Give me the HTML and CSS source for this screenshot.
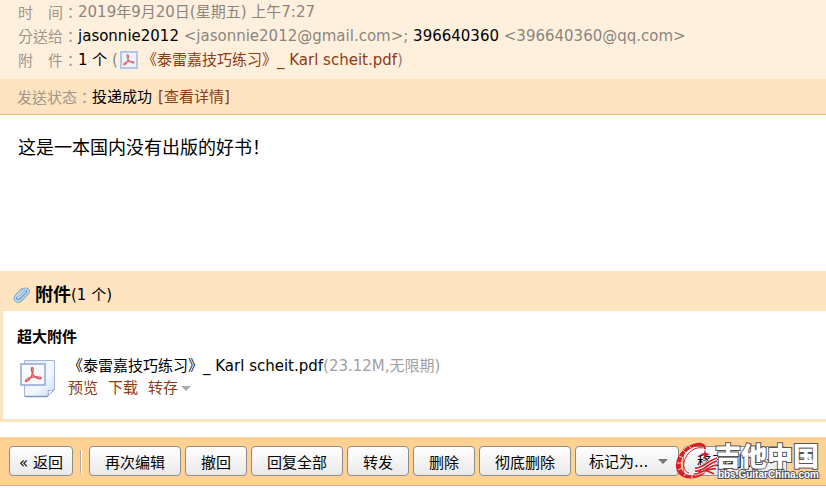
FILE: index.html
```html
<!DOCTYPE html>
<html lang="zh-CN">
<head>
    <meta charset="UTF-8">
    <meta name="viewport" content="width=device-width, initial-scale=1.0">
    <title>邮件</title>
    <link rel="stylesheet" href="styles.css">
</head>
<body>
    <!-- Mail info -->
    <div class="mail-info">
        <div class="row"><span class="label" lang="zh-TW">时　间：</span><span>2019年9月20日(星期五) 上午7:27</span></div>
        <div class="row"><span class="label" lang="zh-TW">分送给：</span><span><b>jasonnie2012</b> &lt;jasonnie2012@gmail.com&gt;; <b>396640360</b> &lt;396640360@qq.com&gt;</span></div>
        <div class="row">
            <span class="label" lang="zh-TW">附　件：</span><span><b>1 个</b> (</span>
            <svg class="pdf-small" width="18" height="18" viewBox="0 0 18 18">
                <rect x="1" y="1" width="16" height="16" fill="#eef3fd" stroke="#b3c5ea" stroke-width="2"/>
                <path d="M7.500 3.500c1.500 0 1 3 .7 4.500-.6 2.500-2.500 6-4.200 5.800-1.400-.6 1.500-2.600 4-3.100 2.300-.5 6.300-.3 6.200.8-.4 1.200-4.500-.7-5.700-2.500C7.300 7.200 6.400 3.500 7.500 3.500z" fill="none" stroke="#e0706c" stroke-width="1.200"/>
            </svg>
            <a href="#">《泰雷嘉技巧练习》_ Karl scheit.pdf</a><span>)</span>
        </div>
    </div>
    <div class="status">
        <span class="label" lang="zh-TW">发送状态：</span><b>投递成功</b><a href="#">[查看详情]</a>
    </div>

    <!-- Mail body -->
    <div class="mail-body">这是一本国内没有出版的好书！</div>

    <!-- Attachments -->
    <div class="attach">
        <div class="attach-head">
            <svg width="18" height="18" viewBox="0 0 18 18" fill="none" stroke-linecap="round">
                <path d="M12.500 5.500l-6 6c-1 1-2.400-.2-1.400-1.300l6-6.200c2.400-2.300 5.600.6 3.400 3.200l-6.600 6.900c-3.500 3.300-7.600-.8-4.600-4.400l5.600-6" stroke="#6f9cc4" stroke-width="3"/>
                <path d="M12.500 5.500l-6 6c-1 1-2.400-.2-1.400-1.300l6-6.200c2.400-2.300 5.600.6 3.400 3.200l-6.600 6.900c-3.500 3.300-7.600-.8-4.600-4.400l5.600-6" stroke="#c3dbf0" stroke-width="1.400"/>
            </svg>
            <h2>附件</h2><span>(1 个)</span>
        </div>
        <div class="attach-list">
            <h3>超大附件</h3>
            <div class="file">
                <svg width="36" height="39" viewBox="0 0 36 39">
                    <defs>
                        <linearGradient id="page" x1="0" y1="0" x2="1" y2="1">
                            <stop offset="0" stop-color="#e3ecfb"/>
                            <stop offset=".6" stop-color="#f3f8ff"/>
                            <stop offset="1" stop-color="#c9daf3"/>
                        </linearGradient>
                    </defs>
                    <path d="M4.500 1.500h30v29l-7 7h-23z" fill="url(#page)" stroke="#a3b6d8"/>
                    <path d="M5 37.500h22.500" stroke="#7f97c6" stroke-width="1.500"/>
                    <path d="M34.500 30.500l-7 7c1-2 1-4 .5-6 2.500.5 4.500.2 6.500-1z" fill="#fff" stroke="#8fa5cf"/>
                    <rect x="1" y="5" width="24" height="21" fill="#f7f9ff" stroke="#8fa8da" stroke-width="1.500"/>
                    <path d="M12 8.500c2 0 1 4 .4 6-1 3.500-4 8.300-6.400 8-2-.8 2.400-3.700 6-4.300 3.300-.7 9.300-.6 9.200 1-.6 1.700-6-.4-8-3.200-1.700-2.700-2.500-7.500-1.200-7.500z" fill="none" stroke="#dd5a56" stroke-width="1.400"/>
                </svg>
                <div class="file-info">
                    <div class="file-name">《泰雷嘉技巧练习》_ Karl scheit.pdf<span>(23.12M,无限期)</span></div>
                    <div class="file-links">
                        <a href="#">预览</a>
                        <a href="#">下载</a>
                        <a href="#" class="more">转存</a>
                    </div>
                </div>
            </div>
        </div>
    </div>

    <!-- Toolbar -->
    <div class="toolbar">
        <button class="back">« 返回</button>
        <span class="divider"></span>
        <button>再次编辑</button>
        <button>撤回</button>
        <button>回复全部</button>
        <button>转发</button>
        <button>删除</button>
        <button>彻底删除</button>
        <select aria-label="标记为"><option>标记为...</option></select>
        <select aria-label="移动到"><option>移动到...</option></select>

        <div class="watermark">
            <svg width="44" height="40" viewBox="0 0 44 40">
                <!-- guitar body ring -->
                <path d="M31 8C31 3 27 1 22 2 11 4 2 13 1 23c-1 11 8 16 19 14 7-1 11-6 15-10l-3-1c-4 4-8 7-14 8C10 35 5 30 6 22 7 13 15 6 23 5c4 0 6 1 6 3z" fill="#d3202a"/>
                <path d="M28 7C20 5 11 12 9 21c-1 6 1 10 5 11" fill="none" stroke="#d3202a"/>
                <path d="M14 5l3 3M8 9l3 3M4 15l4 2M2 22h4M3 29l4-2M9 35l2-3M17 37v-3" stroke="#f6d9c4" stroke-width="1"/>
                <!-- star -->
                <path d="M30 8l1 4 4 1-4 2-1 4-1-4-4-2 4-1z" fill="#d3202a"/>
                <!-- strings -->
                <path d="M20 27c7 1 12-7 22-10M20 30c9 1 13-8 22-10M19 33c10 0 15-9 23-9M24 31c7 0 11-4 17-3M31 30c3 0 5 2 8 3" fill="none" stroke="#fff" stroke-width="3"/>
                <path d="M20 27c7 1 12-7 22-10M20 30c9 1 13-8 22-10M19 33c10 0 15-9 23-9M24 31c7 0 11-4 17-3M31 30c3 0 5 2 8 3" fill="none" stroke="#d3202a" stroke-width="1.700"/>
            </svg>
            <div class="watermark-text">
                <div class="site-name">吉他中国</div>
                <div class="site-url">bbs.GuitarChina.com</div>
            </div>
        </div>
    </div>
</body>
</html>
```
FILE: styles.css
```css
body {
    margin: 0;
    background: #fff;
    color: #000;
    font-family: "DejaVu Sans", "Noto Sans CJK SC", sans-serif;
    font-size: 15px;
    line-height: 24px;
}
a {
    color: #8f3a12;
    text-decoration: none;
}
a:hover {
    text-decoration: underline;
}
b {
    font-weight: normal;
    color: #000;
}
h2, h3 {
    margin: 0;
}
.label {
    color: #a0968a;
    font-family: "Noto Sans CJK TC", sans-serif;
}
.mail-info {
    background: #fff0de;
    color: #8a867e;
    padding: 0 18px 7px;
}
.row {
    display: flex;
    align-items: center;
}
.pdf-small {
    margin: 0 4px 0 2px;
}
.status {
    display: flex;
    background: #fee4c1;
    border-bottom: 1px solid #e9b86c;
    padding: 6px 17px 5px;
}
.status a {
    margin-left: 6px;
}
.mail-body {
    padding: 21px 18px 111px;
    font-size: 18px;
}
.attach {
    border-left: 3px solid #fee4c1;
    border-bottom: 3px solid #fbe6c4;
}
.attach-head {
    display: flex;
    align-items: center;
    height: 40px;
    padding: 7px 10px 0;
    box-sizing: border-box;
    background: #fee4c1;
}
.attach-head h2 {
    margin-left: 4px;
    font-size: 18px;
}
.attach-list {
    padding: 14px 14px 20px;
}
.attach-list h3 {
    font-size: 15px;
}
.file {
    display: flex;
    padding: 6px 3px 0;
}
.file svg {
    margin-top: 4px;
}
.file-info {
    margin-left: 12px;
    line-height: 22px;
}
.file-name span {
    color: #a0a0a0;
}
.file-links {
    display: flex;
    gap: 10px;
}
.more::after {
    content: "";
    display: inline-block;
    margin-left: 3px;
    vertical-align: middle;
    border: 5px solid transparent;
    border-top-color: #aaa;
    border-bottom: 0;
}
.toolbar {
    position: relative;
    display: flex;
    align-items: center;
    gap: 4px;
    margin-top: 15px;
    padding: 9px;
    background: #ffd293;
    border-bottom: 1px solid #e9b05c;
    overflow: hidden;
}
button, select {
    flex: none;
    height: 30px;
    padding: 0 15px;
    border: 1px solid #8c8c8c;
    border-radius: 4px;
    background: linear-gradient(#fff, #e9e9e9);
    color: #000;
    font-family: inherit;
    font-size: 15px;
    cursor: pointer;
}
.back {
    padding: 0 9px;
}
select {
    appearance: none;
    padding: 2px 29px 0 13px;
    background: url("data:image/svg+xml,%3Csvg xmlns='http://www.w3.org/2000/svg' width='10' height='5'%3E%3Cpath d='M0 0h10L5 5z' fill='%23777'/%3E%3C/svg%3E") no-repeat right 10px center, linear-gradient(#fff, #e9e9e9);
}
.divider {
    width: 1px;
    height: 23px;
    margin: 0 3px;
    background: #a9a9a9;
    border-right: 1px solid #fff;
}
.watermark {
    position: absolute;
    right: 7px;
    bottom: 4px;
    display: flex;
    align-items: center;
}
.watermark-text {
    margin-left: -4px;
    color: #fff;
    text-align: right;
    white-space: nowrap;
    -webkit-text-stroke: 2px #555;
    paint-order: stroke fill;
}
.site-name {
    font-family: "Noto Sans CJK SC", sans-serif;
    font-weight: 900;
    font-size: 26px;
    line-height: 28px;
}
.site-url {
    font-family: "Liberation Sans", sans-serif;
    font-weight: bold;
    font-size: 10px;
    line-height: 12px;
}
```
